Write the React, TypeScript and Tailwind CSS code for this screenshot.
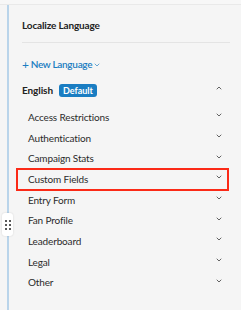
import { ChevronDown, ChevronUp } from "lucide-react";

const SECTIONS = [
  "Access Restrictions",
  "Authentication",
  "Campaign Stats",
  "Custom Fields",
  "Entry Form",
  "Fan Profile",
  "Leaderboard",
  "Legal",
  "Other",
];

export default function App() {
  return (
    <div
      className="relative h-[310px] w-[241px] overflow-hidden bg-[#f5f5f5] text-[#222]"
      style={{ fontFamily: "Lato, 'Open Sans', sans-serif" }}
    >
      <div className="h-[5px] border-b border-[#e9e9e9] bg-[#f7f7f7]" />
      <div className="ml-[7px] h-[305px] border-l-2 border-[#b9d4ea] pl-[13px] pr-[11px]">
        <div className="flex h-[38px] items-center border-b border-[#e4e4e4] pt-[3px] text-[10px] font-bold tracking-[-0.15px]">
          Localize Language
        </div>

        <div className="mt-[14px] flex items-center text-[10px] font-semibold tracking-[-0.3px] text-[#1b7dc1]">
          <span className="mr-[2px] text-[12px] font-normal leading-none">+</span>
          <span>New Language</span>
          <ChevronDown className="ml-[1px] mt-[1px] h-[8px] w-[8px]" strokeWidth={2} />
        </div>

        <div className="mt-[11px] flex h-[14px] items-center">
          <span className="text-[10px] font-bold tracking-[-0.1px]">English</span>
          <span className="ml-[6px] rounded-[3px] bg-[#1a7dc2] px-[4px] text-[9px] font-bold leading-[13px] text-white">
            Default
          </span>
          <ChevronUp className="ml-auto mr-[7px] -mt-[4px] h-[8px] w-[8px] text-[#444]" strokeWidth={2.5} />
        </div>

        <ul className="mt-[10px] flex flex-col">
          {SECTIONS.map((name) => (
            <li
              key={name}
              className="relative flex h-[20.7px] items-center pl-[6px] pr-[7px] text-[10px] tracking-[-0.15px]"
            >
              {name === "Custom Fields" && (
                <span className="absolute -bottom-[1px] -left-[6px] -top-[1px] right-[1px] border-2 border-[#fb2a17]" />
              )}
              <span className="text-[#2b2b2b]">{name}</span>
              <ChevronDown className="ml-auto -mt-[4px] h-[8px] w-[8px] text-[#444]" strokeWidth={2.5} />
            </li>
          ))}
        </ul>
      </div>

      <div className="absolute left-[2px] top-[213px] grid h-[23px] w-[11px] grid-cols-2 content-center justify-items-center gap-x-[1px] gap-y-[2px] rounded-[3px] bg-white px-[2px] shadow-[0_0_2px_rgba(0,0,0,0.15)]">
        {Array.from({ length: 6 }).map((_, i) => (
          <span key={i} className="h-[2px] w-[2px] rounded-full bg-[#222]" />
        ))}
      </div>
    </div>
  );
}
